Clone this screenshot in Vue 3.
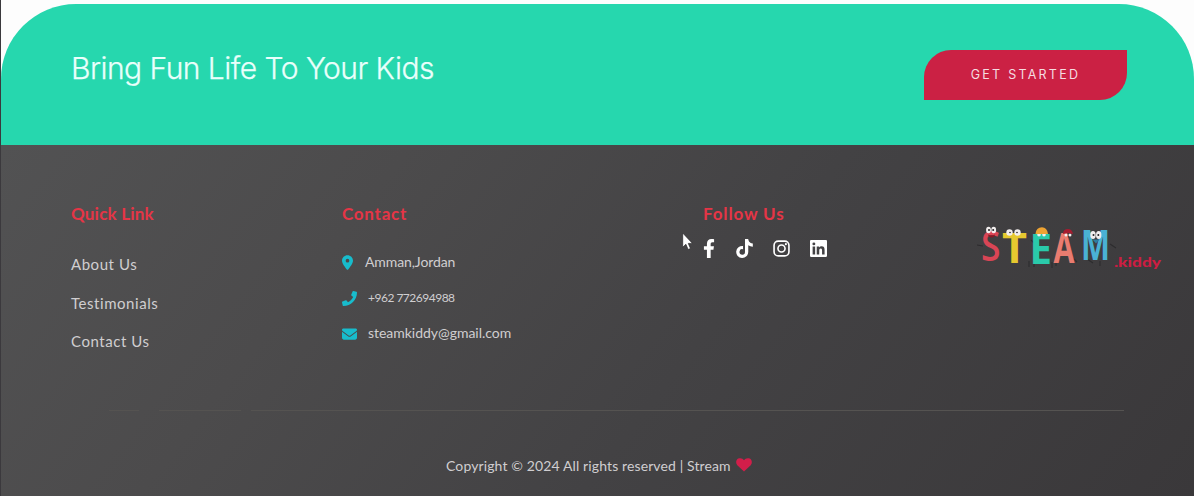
<script setup>
const links = [
  { label: 'About Us', cls: 'about' },
  { label: 'Testimonials', cls: 'testimonials' },
  { label: 'Contact Us', cls: 'contact-us' },
]
</script>

<template>
  <div class="page">
    <section class="banner">
      <h1>Bring Fun Life To Your Kids</h1>
      <button class="cta" type="button">GET STARTED</button>
    </section>

    <footer class="footer">
      <div class="columns">
        <nav class="col quick">
          <h2 class="h-quick">Quick Link</h2>
          <a v-for="l in links" :key="l.label" :class="['link', l.cls]">{{ l.label }}</a>
        </nav>

        <div class="col contact">
          <h2 class="h-contact">Contact</h2>
          <p class="row">
            <svg class="pin" viewBox="0 0 384 512"><path d="M215.700 499.200C267 435 384 279.400 384 192 384 86 298 0 192 0S0 86 0 192c0 87.400 117 243 168.300 307.200 12.300 15.300 35.100 15.300 47.400 0zM192 128a64 64 0 1 1 0 128 64 64 0 0 1 0-128z" /></svg>
            <span class="city">Amman,Jordan</span>
          </p>
          <p class="row">
            <svg class="phone" viewBox="0 0 512 512"><path d="M493.400 24.600l-104-24c-11.300-2.600-22.900 3.300-27.500 13.900l-48 112c-4.200 9.800-1.400 21.300 6.900 28l60.600 49.600c-36 76.700-98.900 140.500-177.200 177.200l-49.600-60.600c-6.800-8.300-18.200-11.100-28-6.900l-112 48C3.900 366.500-2 378.100.600 389.400l24 104C27.100 504.200 36.700 512 48 512c256.100 0 464-207.500 464-464 0-11.200-7.700-20.900-18.600-23.400z" /></svg>
            <span class="tel">+962 772694988</span>
          </p>
          <p class="row">
            <svg class="mail" viewBox="0 0 512 384"><path d="M48 0C21.500 0 0 21.500 0 48c0 15.100 7.100 29.300 19.200 38.400l217.600 163.200c11.400 8.500 27 8.500 38.400 0L492.800 86.400C504.900 77.300 512 63.100 512 48c0-26.500-21.500-48-48-48H48zM0 112v208c0 35.300 28.700 64 64 64h384c35.300 0 64-28.700 64-64V112L294.400 275.200c-22.800 17.100-54 17.100-76.800 0L0 112z" /></svg>
            <span class="email">steamkiddy@gmail.com</span>
          </p>
        </div>

        <div class="col follow">
          <h2 class="h-follow">Follow Us</h2>
          <div class="socials">
            <svg class="fb" viewBox="0 0 320 512"><path d="M279.140 288l14.220-92.660h-88.910v-60.130c0-25.350 12.420-50.060 52.240-50.060h40.420V6.260S260.430 0 225.360 0c-73.220 0-121.080 44.380-121.080 124.720v70.620H22.890V288h81.390v224h100.170V288z" /></svg>
            <svg class="tt" viewBox="0 0 448 512"><path d="M448 209.910a210.060 210.060 0 0 1-122.770-39.250v178.720A162.550 162.550 0 1 1 185 188.310v89.890a74.620 74.620 0 1 0 52.230 71.180V0h88a121.180 121.180 0 0 0 1.860 22.170 122.180 122.180 0 0 0 53.910 80.220A121.430 121.430 0 0 0 448 122.550z" /></svg>
            <svg class="ig" viewBox="0 0 24 24"><g fill="none" stroke="#fff" stroke-width="2.300"><rect x="1.500" y="1.500" width="21" height="21" rx="6" /><circle cx="12" cy="12" r="5" /></g><circle cx="18.200" cy="5.900" r="1.500" /></svg>
            <svg class="li" viewBox="0 0 448 448"><path d="M416 0H31.900C14.300 0 0 14.500 0 32.300v383.400C0 433.500 14.300 448 31.900 448H416c17.600 0 32-14.500 32-32.300V32.300C448 14.500 433.600 0 416 0zM135.400 384H69V170.200h66.500V384h-.1zM102.200 141a38.500 38.500 0 1 1 0-77 38.500 38.500 0 0 1 0 77zM384.300 384h-66.400V280c0-24.800-.5-56.700-34.500-56.700-34.600 0-39.900 27-39.900 54.900V384h-66.400V170.200h63.700v29.200h.9c8.900-16.800 30.600-34.500 62.900-34.500 67.200 0 79.700 44.300 79.700 101.900V384z" /></svg>
          </div>
        </div>

        <svg class="logo" viewBox="0 0 190 54">
          <g fill="none" stroke="#2d2c2e" stroke-width="1.100">
            <path d="M6 20l-6-1M54 14l5 5M52 35v6M57 35v6M75 36v6M89 12l6-3M79 35v5M97 33l3 3M110 33l6 4M133 18l6 4M123 35v5M148 34l4 4" />
          </g>
          <g class="letters">
            <text x="4" y="35" fill="#d94555" textLength="19.500" lengthAdjust="spacingAndGlyphs" class="thin">S</text>
            <text x="25" y="36.500" fill="#e6c82f" textLength="25" lengthAdjust="spacingAndGlyphs">T</text>
            <text x="52.500" y="38" fill="#2acaaa" textLength="22.500" lengthAdjust="spacingAndGlyphs">E</text>
            <text x="76.500" y="37" fill="#ea7c70" textLength="21" lengthAdjust="spacingAndGlyphs">A</text>
            <text x="104" y="34" fill="#4ab1d4" textLength="29" lengthAdjust="spacingAndGlyphs">M</text>
          </g>
          <g fill="#f2eeee">
            <ellipse cx="11.500" cy="4" rx="2.400" ry="3.200" /><ellipse cx="16.700" cy="4" rx="2.400" ry="3.200" />
            <circle cx="32.500" cy="6.500" r="3.200" /><circle cx="40.500" cy="6.500" r="3.200" />
            <circle cx="62" cy="8.800" r="1.800" /><circle cx="67" cy="8.800" r="1.800" />
            <ellipse cx="116" cy="9" rx="2.700" ry="4" /><ellipse cx="121.700" cy="9" rx="2.700" ry="4" />
            <circle cx="89" cy="9" r="1.500" /><circle cx="93" cy="9" r="1.500" />
          </g>
          <path d="M11 8.500q4 2 7 0-.5 3-3.500 3-3 0-3.500-3z" fill="#8b1623" />
          <path d="M58.500 8Q59 1.300 65 1.300q5 0 6 6.700z" fill="#eea332" />
          <path d="M86 8q0-5 5-5 4 0 5 5l-5-1z" fill="#a51c30" />
          <path d="M115.500 13.500h7l-3.500 4z" fill="#2e7da0" />
          <g fill="#252325"><circle cx="12" cy="4" r="1" /><circle cx="16.200" cy="4" r="1" /><circle cx="33" cy="6.500" r=".8" /><circle cx="40" cy="6.500" r=".8" /><circle cx="116.500" cy="9" r="1" /><circle cx="121.300" cy="9" r="1" /></g>
          <text class="kiddy" x="137" y="40.500" textLength="47" lengthAdjust="spacingAndGlyphs">.kiddy</text>
        </svg>
      </div>

      <div class="divider"><i class="d1"></i><i class="d2"></i><i class="d3"></i></div>

      <div class="copyright">
        <span>Copyright © 2024 All rights reserved | Stream</span>
        <svg class="heart" viewBox="0 0 16 14"><path d="M8 13.500L1.300 7.200C-.6 5.200 0 1.600 2.300.600 4.400-.300 6.800.300 8 2.300 9.200.300 11.600-.300 13.700.600 16 1.600 16.600 5.200 14.700 7.200z" /></svg>
      </div>
    </footer>

    <svg class="cursor" viewBox="0 0 11 19"><path d="M.7 1v14.300l3.200-3 2.200 5.200 2.400-1-2.200-5.100h4.200z" /></svg>
  </div>
</template>

<style>
body { background: #fdfdfd; }
</style>

<style scoped>
* { box-sizing: border-box; }
.page {
  position: relative;
  width: 1194px;
  height: 496px;
  padding-top: 4px;
  border-left: 1px solid #3b393d;
  overflow: hidden;
  font-family: Lato, "Open Sans", sans-serif;
}
.banner {
  display: flex;
  justify-content: space-between;
  align-items: flex-start;
  height: 141px;
  padding: 46px 67px 0 70px;
  border-radius: 75px 75px 0 0;
  background: #26d7ae;
}
h1 {
  margin: 0;
  font: 300 30px/36px Inter, sans-serif;
  letter-spacing: -0.53px;
  color: #e9fffb;
  -webkit-text-stroke: 0.25px #e9fffb;
  white-space: nowrap;
}
.cta {
  width: 203px;
  height: 50px;
  padding: 0;
  border: 0;
  border-radius: 27px 0 27px 0;
  background: #cb2144;
  color: #f5dce1;
  font: 400 12.5px/50px Inter, sans-serif;
  letter-spacing: 2.25px;
}
.footer {
  height: 351px;
  padding-left: 70px;
  background: linear-gradient(128deg, #525253 0%, #4c4b4c 28%, #434244 58%, #3a383a 100%);
  color: #d0ced0;
}
.columns {
  display: grid;
  grid-template-columns: 271px 361px 274px 1fr;
  height: 265px;
  padding-top: 57px;
}
.col { display: flex; flex-direction: column; align-items: flex-start; }
h2 {
  margin: 0;
  height: 24px;
  font-size: 17px;
  line-height: 24px;
  font-weight: 700;
  color: #e53546;
  white-space: nowrap;
}
.h-quick { letter-spacing: 0.2px; }
.h-contact { margin-bottom: 19px; letter-spacing: 0.75px; }
.h-follow { letter-spacing: 0.85px; }
.link { font-size: 15px; line-height: 20px; margin-bottom: 18.500px; letter-spacing: 0.55px; white-space: nowrap; }
.about { margin-top: 28px; }
.row { display: flex; align-items: center; margin: 0; height: 35.500px; font-size: 14px; white-space: nowrap; }
.row svg { fill: #18bccc; flex: none; }
.pin { width: 11px; height: 15px; margin-right: 12px; }
.phone { width: 15px; height: 15px; margin-right: 11px; }
.mail { width: 15px; height: 12px; margin-right: 11px; }
.row span { position: relative; top: -1px; }
.city { letter-spacing: -0.1px; }
.row .tel { font-size: 12px; letter-spacing: -0.5px; }
.email { letter-spacing: -0.03px; }
.socials { display: flex; align-items: center; height: 20px; margin-top: 12.500px; }
.socials svg { fill: #fff; }
.fb { width: 12px; height: 19px; margin-right: 21px; }
.tt { width: 17px; height: 19px; margin-right: 20px; }
.ig { width: 17px; height: 17px; margin-right: 20px; }
.li { width: 17px; height: 17px; }
.logo { width: 190px; height: 54px; margin-top: 24px; overflow: visible; }
.letters text { font: 700 42px "Open Sans", sans-serif; }
.letters .thin { font-weight: 600; }
.kiddy { font: 900 14px Lato, sans-serif; fill: #cd1d42; }
.divider { display: flex; height: 1px; padding-left: 38px; }
.divider i { height: 1px; background: #555351; }
.d1 { width: 30px; margin-right: 20px; }
.d2 { width: 82px; margin-right: 10px; }
.d3 { width: 873px; }
.copyright { display: flex; align-items: center; margin: 43px 0 0 375px; height: 22px; font-size: 14px; letter-spacing: 0.12px; white-space: nowrap; }
.heart { width: 16px; height: 14px; margin-left: 5px; fill: #d21e4a; }
.cursor { position: absolute; left: 681px; top: 232px; width: 11px; height: 19px; fill: #fff; stroke: #29282b; stroke-width: .7; }
</style>
